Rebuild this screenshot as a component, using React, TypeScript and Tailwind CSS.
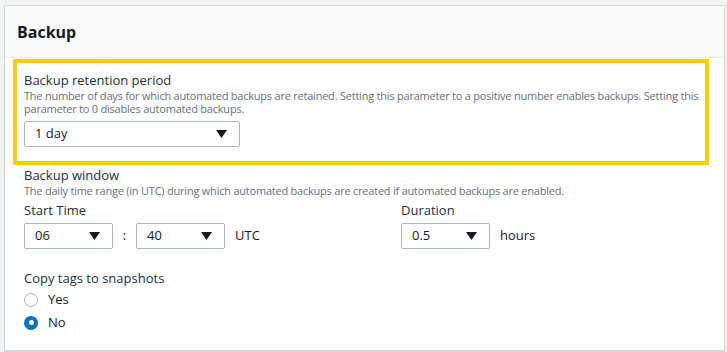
import React from "react"

function Select({ value, width }: { value: string; width: string }) {
  return (
    <div
      className={`${width} h-[26px] border border-[#aab7b8] rounded-[2px] bg-white flex items-center justify-between pl-[10px] pr-[12px] text-[13px] text-[#16191f]`}
    >
      <span>{value}</span>
      <svg width="11" height="8" viewBox="0 0 11 8">
        <path d="M0 0 H11 L5.5 8 Z" fill="#16191f" />
      </svg>
    </div>
  )
}

function Radio({ label, checked }: { label: string; checked?: boolean }) {
  return (
    <div className="flex items-center gap-[10px] h-[23px]">
      {checked ? (
        <span className="w-[14px] h-[14px] rounded-full bg-[#0073bb] flex items-center justify-center">
          <span className="w-[5px] h-[5px] rounded-full bg-white" />
        </span>
      ) : (
        <span className="w-[14px] h-[14px] rounded-full border border-[#aab7b8] bg-white" />
      )}
      <span className="text-[13px] text-[#16191f]">{label}</span>
    </div>
  )
}

export default function App() {
  return (
    <div
      className="w-[727px] h-[352px] bg-[#f2f3f3] pt-[5px] pl-[4px] pr-[2px]"
      style={{ fontFamily: '"Open Sans", "Liberation Sans", sans-serif' }}
    >
      <div className="h-[346px] bg-white border border-[#d5dbdb] shadow-[0_1px_1px_rgba(0,0,0,0.1)]">
        <div className="h-[52px] bg-[#fafafa] border-b border-[#eaeded] flex items-center pl-[12px]">
          <h2 className="text-[16px] font-bold text-[#16191f]">Backup</h2>
        </div>
        <div className="pl-[8px] pt-[1px]">
          <div className="w-[696px] h-[106px] border-[4px] border-[#ffcc00] pl-[7px] pt-[8px]">
            <div className="text-[13px] text-[#232f3e] leading-[18px]">Backup retention period</div>
            <div className="text-[11px] text-[#687078] leading-[13px] tracking-[-0.22px]">
              The number of days for which automated backups are retained. Setting this parameter to a positive number enables backups. Setting this parameter to 0 disables automated backups.
            </div>
            <div className="mt-[6px]">
              <Select value="1 day" width="w-[216px]" />
            </div>
          </div>
          <div className="pl-[11px] pt-[1px]">
            <div className="text-[13px] text-[#232f3e] leading-[18px]">Backup window</div>
            <div className="text-[11px] text-[#687078] leading-[13px] tracking-[-0.22px]">
              The daily time range (in UTC) during which automated backups are created if automated backups are enabled.
            </div>
            <div className="flex mt-[3px]">
              <div className="w-[377px]">
                <div className="text-[13px] text-[#232f3e] leading-[20px]">Start Time</div>
                <div className="flex items-center mt-[3px]">
                  <Select value="06" width="w-[89px]" />
                  <span className="w-[23px] text-center text-[13px] text-[#16191f]">:</span>
                  <Select value="40" width="w-[89px]" />
                  <span className="ml-[10px] text-[13px] text-[#16191f]">UTC</span>
                </div>
              </div>
              <div>
                <div className="text-[13px] text-[#232f3e] leading-[20px]">Duration</div>
                <div className="flex items-center mt-[3px]">
                  <Select value="0.5" width="w-[89px]" />
                  <span className="ml-[10px] text-[13px] text-[#16191f]">hours</span>
                </div>
              </div>
            </div>
            <div className="mt-[20px] text-[13px] text-[#232f3e] leading-[18px]">Copy tags to snapshots</div>
            <div className="mt-[1px]">
              <Radio label="Yes" />
              <Radio label="No" checked />
            </div>
          </div>
        </div>
      </div>
    </div>
  )
}
